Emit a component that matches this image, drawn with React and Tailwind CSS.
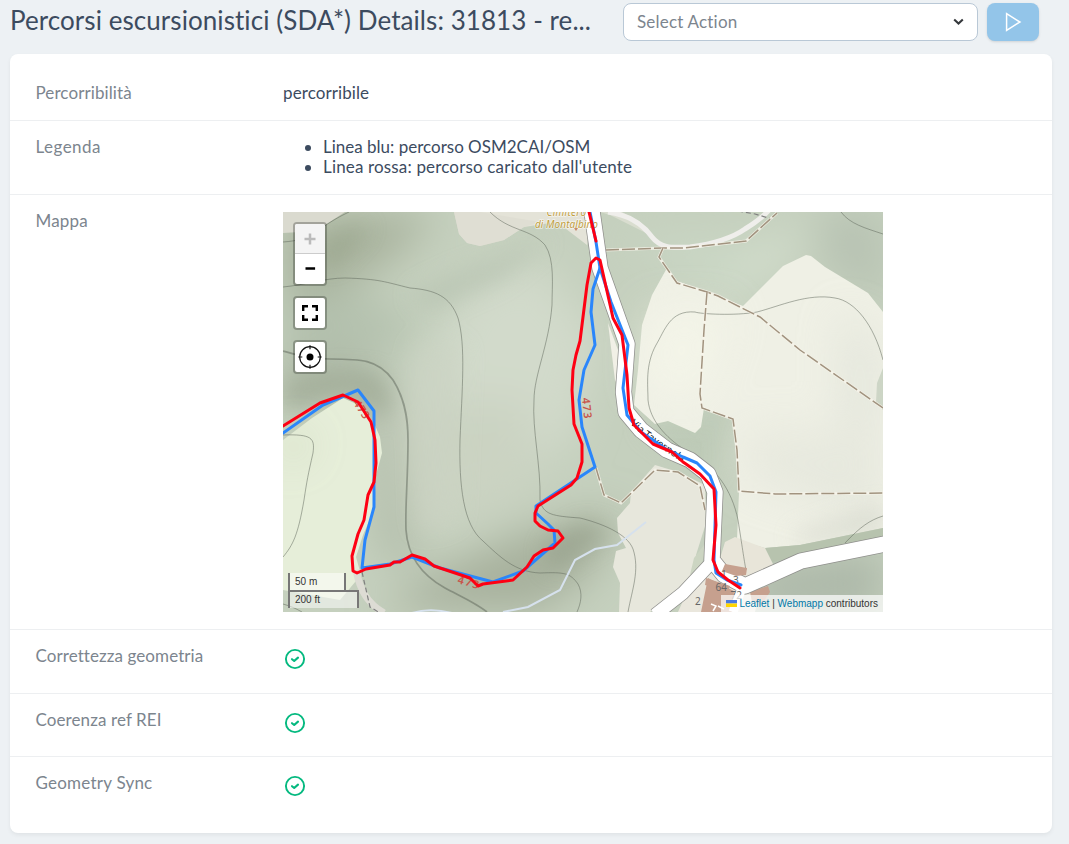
import React from 'react';

const contours = [
  'M283 287C305 285 325 278 345 278C380 279 385 282 410 288C435 290 450 296 458 318C466 345 462 390 460 440C459 485 463 525 483 541C500 557 515 572 540 573C565 572 570 573 578 584C583 593 581 603 577 612',
  'M490 212C510 232 530 228 545 245C555 260 552 285 552 305C549 345 534 375 534 400C532 430 541 465 540 500C543 515 553 516 580 518C600 523 627 533 633 549C640 570 632 590 628 612',
  'M883 360C874 325 855 301 835 298C808 293 780 306 757 312C735 316 700 314 695 312C670 310 665 330 656 345C645 365 648 385 648 400C650 420 665 437 685 450C715 465 732 490 738 520C742 545 744 560 746 570',
  'M841 212C850 224 865 228 883 234',
  'M845 543C860 527 870 520 883 516',
  'M283 435C312 434 315 438 313 453C308 475 307 480 304 500C298 535 293 545 283 557',
  'M283 242C315 240 315 228 349 212',
  'M283 604C290 606 295 608 302 612',
];

const tracks = [
  'M606 250L663 248L683 248L720 244L746 241L777 213',
  'M663 248L659 257L677 283L707 292L718 296L760 317L800 350L883 408',
  'M707 292L704 330L700 394L702 408L733 419L737 450L739 491L775 494L883 493',
  'M596 468L604 495L621 503L655 470L678 472L700 486L705 510',
];

const road = 'M591.5 208L600 268L627 344L623.5 392L626 412L641 430L667 450L690 460L708 474L715 492L712 560L724 575L745 586L801 561L890 543';
const branch = 'M712 562L683 593L655 615';
const osmPath =
  'M283 433L323 405L358 390L374 411L374 507L365 540L362 568L390 564L412 557L440 568L493 582L523 571L555 543L554 530L548 524L536 513L536 506L595 467L582 427L579 400L584 370L595 345L591 312L593 289L600 268L596 242L590 212';
const osmRoad = 'M600 268L611 302L628 345L623 388L627 415L641 432L666 449L683 457L697 463L710 476L716 492L714 560L716 573L727 580L741 585';
const userPath =
  'M283 426L320 403L343 395L358 402L371 422L375 440L376 463L374 482L368 495L364 520L358 534L352 556L353 571L357 573L366 569L390 565L394 562L400 562L412 555L425 559L434 566L470 578L478 586L483 584L513 580L527 567L534 556L543 550L553 548L563 538L558 531L548 530L540 526L535 521L535 513L538 506L571 485L577 478L582 462L582 444L574 424L572 390L573 370L576 355L580 341L587 285L591 263L596 258L600 260L613 318L622 335L627 375L629 408L634 425L653 444L672 452L683 462L686 464L700 474L714 489L716 525L713 560L718 572L728 580L740 588';

function Terrain() {
  return (
    <svg viewBox="283 212 600 400" width="600" height="400" className="block">
      <defs>
        <filter id="soft" x="-60%" y="-60%" width="220%" height="220%">
          <feGaussianBlur stdDeviation="20" />
        </filter>
        <filter id="softer" x="-60%" y="-60%" width="220%" height="220%">
          <feGaussianBlur stdDeviation="11" />
        </filter>
      </defs>
      <rect x="283" y="212" width="600" height="400" fill="#c5d0be" />
      <g filter="url(#soft)">
        <path d="M283 212H440L390 262L320 300L283 300Z" fill="#a8b29d" />
        <path d="M283 300L350 290L420 320L400 350L283 355Z" fill="#b4c1ae" />
        <path d="M283 355H365L405 405L420 560L385 560L372 420L340 385L283 400Z" fill="#acb7a4" />
        <path d="M470 285L540 262L600 340L570 440L500 490L425 480L420 380Z" fill="#d2dacb" />
        <path d="M390 400L530 400L535 495L410 540Z" fill="#cbd3c2" />
        <path d="M380 612L440 570L530 530L620 510L590 575L540 612Z" fill="#a7b19d" />
        <path d="M620 240L730 240L750 300L700 280Z" fill="#cbd8c6" />
        <path d="M740 250L815 222L780 270L730 300Z" fill="#d3decd" />
        <path d="M815 212H883V310L825 260Z" fill="#b7c2b2" />
        <path d="M740 570L883 550V612H760Z" fill="#acb7a8" />
      </g>
      <g filter="url(#softer)" opacity=".6">
        <path d="M320 252L350 228L370 225L330 268Z" fill="#929f84" />
        <path d="M410 295L450 275L530 245L550 240L500 280L430 310Z" fill="#b4c0ae" />
        <path d="M545 545L585 522L615 532L580 552L550 572Z" fill="#919b86" />
        <path d="M283 380L345 370L367 390L283 412Z" fill="#98a38d" />
        <path d="M345 375L375 372L392 400L380 420Z" fill="#98a38d" />
        <path d="M735 380L640 425L710 480Z" fill="#b8c6b2" />
        <path d="M415 345L462 345L455 520L420 530Z" fill="#cbd3c3" />
      </g>

      <path d="M283 212H345L322 227L300 232L283 233Z" fill="#dadacf" />
      <path d="M454 212L459 234L467 243L480 246L504 240L524 227L557 222L587 245L592 212Z" fill="#e4e3d8" />
      <path d="M454 212L459 234L467 243L480 246L504 240L524 227L540 222L480 212Z" fill="#dcdbd1" opacity=".6" />
      <path d="M600 212H622L640 222L650 235L610 215Z" fill="#d9ddcf" />
      <path d="M283 440L312 418L343 398L359 405L374 423L380 437L382 453L376 475L374 510L363 535L356 557L361 575L340 600L283 590Z" fill="#e6eed9" />
      <path d="M667 268L677 281L707 292L743 306L783 266L806 255L811 256L825 267L868 293L883 312V368L877 383L876 402L883 410V528L800 545L765 548L737 540L739 492L733 419L704 408L701 427L695 433L668 421L655 424L634 405L638 370L642 325L652 295Z" fill="#eff0e5" />
      <g filter="url(#soft)" opacity=".65">
        <path d="M840 310L880 340V520L750 480L840 430Z" fill="#dfe2d8" />
        <path d="M650 310L730 310L700 400L645 390Z" fill="#f6f7ea" />
        <path d="M745 430L870 430V480H745Z" fill="#e4e6db" />
        <path d="M283 465L315 440L283 435Z" fill="#b6c2a6" />
      </g>
      <path d="M792 535L883 505V530L800 544Z" fill="#d6d8cd" filter="url(#softer)" opacity=".8" />
      <path d="M765 548L800 545L883 528V540L800 556L772 562Z" fill="#b7c3ae" />
      <path d="M655 465L678 472L705 485L706 523L696 555L700 570L650 612H619L620 583L613 567L616 551L626 548L618 533L617 518L630 503L631 492Z" fill="#e7e7dc" />
      <path d="M706 523L704 545L694 558L690 575L700 568L706 550Z" fill="#ccd5c2" />
      <path d="M725 542L735 537L765 548L776 570L735 582L715 575Z" fill="#e8e5d9" />
      <path d="M690 585L705 570L735 578L760 592L755 612H678Z" fill="#eae7dd" />
      <path d="M608 323L618 350L619 388L615 380Z" fill="#f1f0e6" />

      <g fill="none" stroke="#5e6659" strokeOpacity=".5" strokeWidth="1">
        {contours.map((d) => (
          <path key={d} d={d} />
        ))}
        <path d="M283 351C295 354 305 359 330 359C360 359 378 359 393 380C407 402 408 425 408 440C408 480 405 505 406 530C408 560 425 577 445 588C462 597 476 603 487 612" strokeWidth="1.7" />
      </g>

      <path d="M412 613C425 609 440 610 452 613M503 612L528 607L560 590L575 560L595 549L617 545L646 522" fill="none" stroke="#d6e1ed" strokeWidth="2" />
      <path d="M608 212C630 215 644 226 652 237C662 250 676 247 690 247C720 243 735 236 745 229C758 221 763 217 769 210" fill="none" stroke="#efeeeb" strokeWidth="5" />
      <path d="M356 570C360 590 367 603 384 613" fill="none" stroke="#dddcd4" strokeWidth="7" />
      <path d="M362 572L370 607L380 613M738 211L755 214L772 219" fill="none" stroke="#7f7f7f" strokeWidth="1.2" strokeDasharray="5 3" />
      <g fill="none">
        {tracks.map((d) => (
          <React.Fragment key={d}>
            <path d={d} stroke="#f6f4ea" strokeOpacity=".8" strokeWidth="3" />
            <path d={d} stroke="#a1937f" strokeWidth="1.5" strokeDasharray="13 3" />
          </React.Fragment>
        ))}
      </g>

      <path d="M708 578L734 591L732 612H701ZM750 592L768 586L770 592L762 604L752 602Z" fill="#c6a08e" />
      <g fill="none" strokeLinejoin="round">
        <path d={branch} stroke="#8f8f8c" strokeWidth="14" />
        <path d={road} stroke="#8f8f8c" strokeWidth="17" />
        <path d={branch} stroke="#fff" strokeWidth="12.5" />
        <path d="M742 588L733 612" stroke="#fff" strokeWidth="9" />
        <path d={road} stroke="#fff" strokeWidth="15.5" />
      </g>
      <path d="M725 564L747 568L746 575L736 576L722 571ZM706 578L730 586L728 591L705 585Z" fill="#c6a08e" />
      <path d="M711 604L716 606L713 611M718 606L724 609" fill="none" stroke="#fff" strokeWidth="1.5" />

      <g fontFamily="'Open Sans', sans-serif" fontSize="10" fontStyle="italic" fill="#bf9a35" stroke="#fff" strokeOpacity=".6" strokeWidth="1.5" paintOrder="stroke" textAnchor="middle">
        <text x="566.5" y="215.5" letterSpacing=".3">Cimitero</text>
        <text x="566.5" y="227.5" letterSpacing=".1">di Montalbino</text>
      </g>
      <path d="M574 228L578 228L576 231Z" fill="#c98a68" />
      <g fontFamily="'Noto Sans', sans-serif" fontSize="11" fontWeight="600" fill="#c8564b">
        <text transform="translate(582 398) rotate(84)" letterSpacing="1">473</text>
        <text transform="translate(353 403) rotate(57)" letterSpacing=".5">473</text>
        <text transform="translate(457 583) rotate(16)" letterSpacing="1.4">473</text>
      </g>
      <path id="via" d="M630 424L645 437L665 451L685 464L698 471" fill="none" />
      <text fontFamily="'Noto Sans', sans-serif" fontSize="10" fill="#111" letterSpacing=".2">
        <textPath href="#via">Via Tavernola</textPath>
      </text>
      <g fontFamily="'Noto Sans', sans-serif" fontSize="10" fill="#666">
        <text x="721" y="578">1</text>
        <text x="733" y="583.5">3</text>
        <text x="715.5" y="590.5">64</text>
        <text x="730.5" y="598.5">72</text>
        <text x="695" y="605">2</text>
      </g>

      <g fill="none" strokeWidth="3" strokeLinecap="round" strokeLinejoin="round">
        <path d={osmPath} stroke="#2a86fb" />
        <path d={osmRoad} stroke="#2a86fb" />
        <path d={userPath} stroke="#fe0013" />
        <path d="M589 212L596 241" stroke="#fe0013" />
      </g>
    </svg>
  );
}

function MapView() {
  return (
    <div className="relative mt-px h-[400px] w-[600px] overflow-hidden font-['Liberation_Sans',sans-serif] text-[#333]">
      <Terrain />
      <div className="absolute left-[10px] top-[10px] flex flex-col gap-[10px]">
        <div className="flex w-[34px] flex-col overflow-hidden rounded-[4px] border-2 border-black/25 bg-white bg-clip-padding">
          <button className="flex h-[30px] items-center justify-center border-b border-[#ccc] bg-[#f4f4f4]">
            <svg width="12" height="12" viewBox="0 0 12 12"><path d="M6 .5v11M.5 6h11" stroke="#bbb" strokeWidth="2.5" /></svg>
          </button>
          <button className="flex h-[30px] items-center justify-center">
            <svg width="12" height="12" viewBox="0 0 12 12"><path d="M1.5 5.5h9.6" stroke="#000" strokeWidth="2.4" /></svg>
          </button>
        </div>
        <button className="flex h-[34px] w-[34px] items-center justify-center rounded-[4px] border-2 border-black/25 bg-white bg-clip-padding">
          <svg width="16" height="16" viewBox="0 0 16 16" fill="none" stroke="#000" strokeWidth="2.4"><path d="M1.2 6V1.2H6M10 1.2h4.8V6M14.8 10v4.8H10M6 14.8H1.2V10" /></svg>
        </button>
        <button className="flex h-[34px] w-[34px] items-center justify-center rounded-[4px] border-2 border-black/25 bg-white bg-clip-padding">
          <svg width="24" height="24" viewBox="0 0 24 24" fill="none" stroke="#111"><circle cx="12" cy="12" r="10.3" strokeWidth="1.2" /><path d="M12 .3v4M12 19.7v4M.3 12h4M19.7 12h4" strokeWidth="1.2" /><circle cx="12" cy="12" r="3.5" fill="#000" stroke="none" /></svg>
        </button>
      </div>
      <div className="absolute bottom-1 left-[5px] flex flex-col items-start text-[10px] leading-[11px]">
        <div className="h-[17px] w-[58px] border-2 border-b-0 border-t-0 border-[#777] bg-white/50 px-[5px] pt-[3px]">50 m</div>
        <div className="h-[18px] w-[71px] border-2 border-b-0 border-[#777] bg-white/50 px-[5px] pt-[2px]">200 ft</div>
      </div>
      <div className="absolute bottom-0 right-0 flex h-[17px] items-center whitespace-pre bg-white/70 px-[5px] text-[10px]">
        <svg width="11" height="7" viewBox="0 0 11 7" className="mr-px"><path fill="#4c7be1" d="M0 0h11v3.5H0z" /><path fill="#ffd500" d="M0 3.5h11V7H0z" /></svg>
        <span className="ml-px text-[#0078a8]">Leaflet</span> | <span className="text-[#0078a8]">Webmapp</span> contributors
      </div>
    </div>
  );
}

function CheckIcon() {
  return (
    <svg width="24" height="24" viewBox="0 0 24 24" fill="none" stroke="#04b97f" className="mt-px block">
      <circle cx="12" cy="12" r="9.1" strokeWidth="1.9" />
      <path d="M9 12.2L11.2 14L15 10.6" strokeWidth="2.1" strokeLinecap="round" strokeLinejoin="round" />
    </svg>
  );
}

function Row({ label, labelClass, className, children }) {
  return (
    <div className={'flex border-[#edeff1] pl-[25.5px] pt-4 text-[17px] leading-5 ' + className}>
      <div className="w-[247.5px] shrink-0 text-[#7c858e]">
        <span className={labelClass}>{label}</span>
      </div>
      <div className="text-[#3c4b5f]">{children}</div>
    </div>
  );
}

export default function App() {
  return (
    <div className="h-[844px] overflow-hidden bg-[#edf1f4] pl-[10px] pr-[17px] font-['Lato',sans-serif]">
      <header className="flex h-[54px] items-start pr-[13px] pt-[3px]">
        <h1 className="-mt-px w-[613px] shrink-0 whitespace-nowrap text-[26px] leading-[37px] text-[#3c4b5f]">
          <span className="tracking-[0.07px]">Percorsi escursionistici (SDA*) Details: 31813 - re...</span>
        </h1>
        <div className="flex h-[38px] w-[355px] shrink-0 items-center justify-between rounded-lg border border-[#b9c8d6] bg-white pl-[13px] pr-[13px] text-[17px] text-[#7c858e]">
          <span className="tracking-[0.2px]">Select Action</span>
          <svg width="11" height="8" viewBox="0 0 11 8" fill="none"><path d="M1.2 1.5L5.5 5.5L9.8 1.5" stroke="#35383c" strokeWidth="2.1" /></svg>
        </div>
        <button className="ml-[9px] flex h-[38px] w-[52px] shrink-0 items-center justify-center rounded-lg bg-[#93c5e9] shadow-sm">
          <svg width="18" height="20" viewBox="0 0 18 20" fill="none"><path d="M2.6 1.7L16 10L2.6 18.3Z" stroke="#fff" strokeWidth="1.5" /></svg>
        </button>
      </header>
      <main className="flex h-[779px] flex-col rounded-lg bg-white pt-[13px] shadow-[0_2px_4px_rgba(0,0,0,0.06)]">
        <Row label="Percorribilità" labelClass="tracking-[0.1px]" className="h-[54px] border-b">
          <span className="tracking-[0.1px]">percorribile</span>
        </Row>
        <Row label="Legenda" labelClass="tracking-[0.45px]" className="h-[74px] border-b">
          <ul className="list-disc pl-10">
            <li>Linea blu: percorso OSM2CAI/OSM</li>
            <li className="tracking-[0.16px]">Linea rossa: percorso caricato dall'utente</li>
          </ul>
        </Row>
        <Row label="Mappa" labelClass="tracking-[0.15px]" className="h-[435px] border-b">
          <MapView />
        </Row>
        <Row label="Correttezza geometria" labelClass="tracking-[0.08px]" className="h-16 border-b">
          <CheckIcon />
        </Row>
        <Row label="Coerenza ref REI" labelClass="tracking-[0.1px]" className="h-[63px] border-b">
          <CheckIcon />
        </Row>
        <Row label="Geometry Sync" labelClass="tracking-[0.23px]" className="h-[76px]">
          <CheckIcon />
        </Row>
      </main>
    </div>
  );
}
